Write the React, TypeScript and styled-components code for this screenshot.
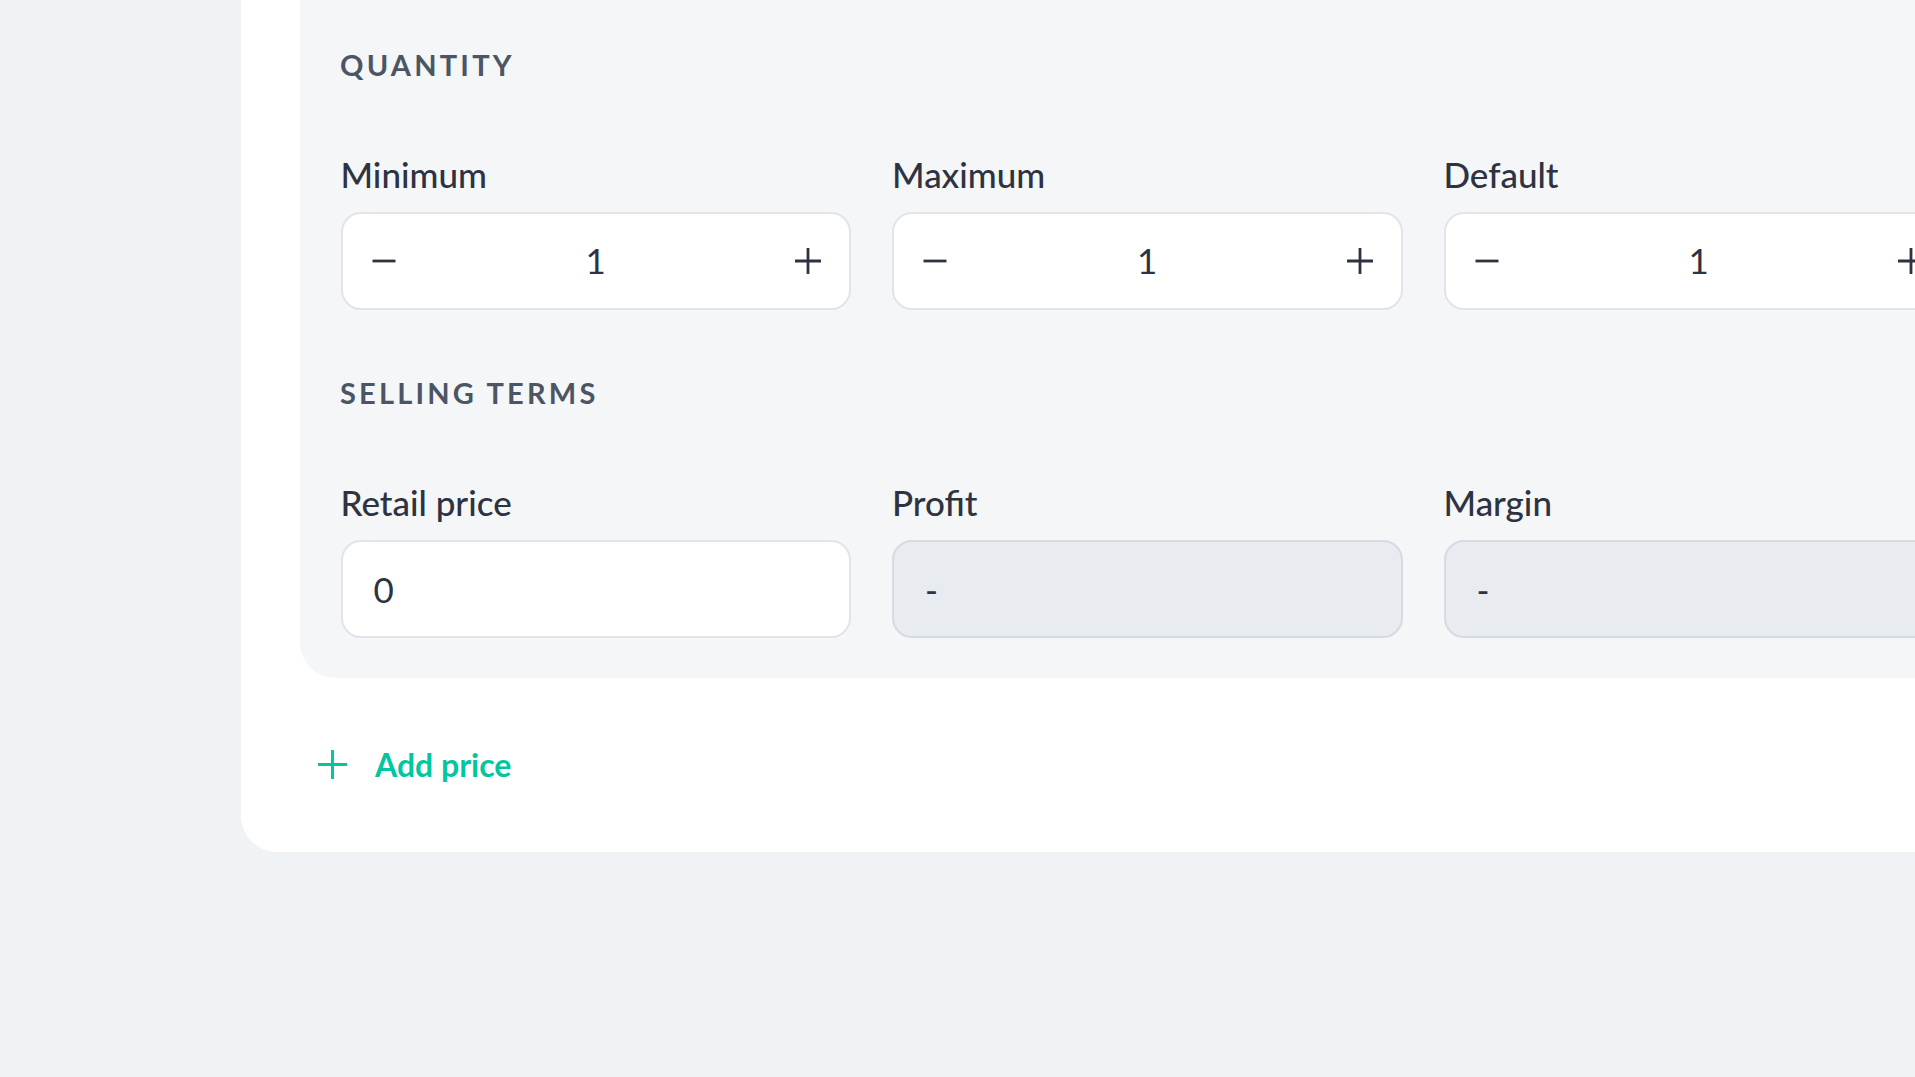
import React from "react";
import styled, { createGlobalStyle } from "styled-components";

const GlobalStyle = createGlobalStyle`
  html, body { margin: 0; padding: 0; }
  body {
    background: #eff3f6;
    font-family: Lato, "Noto Sans", sans-serif;
    overflow: hidden;
    -webkit-font-smoothing: antialiased;
  }
  * { box-sizing: border-box; }
`;

const Page = styled.div`
  width: 1915px;
  height: 1077px;
  overflow: hidden;
`;

const Card = styled.div`
  margin-left: 241px;
  width: 1800px;
  background: #ffffff;
  border-bottom-left-radius: 36px;
  padding: 0 59px;
`;

const Panel = styled.section`
  background: #f4f6f8;
  border-radius: 0 0 36px 36px;
  padding: 48px 41px 40px 40.5px;
`;

const SectionTitle = styled.h3<{ $top?: number }>`
  margin: ${(p) => p.$top ?? 0}px 0 0 -0.5px;
  font-size: 29px;
  line-height: 1.2;
  font-weight: 700;
  letter-spacing: 3.2px;
  color: #4b5563;
  text-transform: uppercase;
`;

const FieldGrid = styled.div`
  display: grid;
  grid-template-columns: repeat(3, 510.5px);
  column-gap: 41px;
  margin-top: 70px;
`;

const Field = styled.div`
  display: flex;
  flex-direction: column;
`;

const Label = styled.label`
  font-size: 35px;
  line-height: 1.2;
  font-weight: 500;
  color: #2d3340;
  margin-bottom: 17px;
`;

const Box = styled.div<{ $disabled?: boolean }>`
  height: 98px;
  border-radius: 20px;
  border: 2px solid ${(p) => (p.$disabled ? "#d6dae1" : "#e1e4ea")};
  background: ${(p) => (p.$disabled ? "#e8ebf0" : "#ffffff")};
  display: flex;
  align-items: center;
  padding: 0 31px;
  font-size: 35px;
  font-weight: 400;
  color: #2d3340;
`;

const StepperBox = styled(Box)`
  justify-content: space-between;
  padding: 0 28px;
`;

const StepButton = styled.button`
  width: 26px;
  height: 26px;
  padding: 0;
  border: 0;
  background: transparent;
  display: flex;
  align-items: center;
  justify-content: center;
  cursor: pointer;
  color: #2d3340;
`;

const StepValue = styled.span`
  font-size: 35px;
  line-height: 1;
  color: #2d3340;
`;

const AddRow = styled.div`
  padding: 66px 0 67px 18px;
  display: flex;
`;

const AddButton = styled.button`
  display: flex;
  align-items: center;
  gap: 28px;
  padding: 0;
  border: 0;
  background: transparent;
  font-family: inherit;
  font-size: 32px;
  line-height: 41px;
  font-weight: 700;
  color: #00c7a0;
  cursor: pointer;
`;

const MinusIcon = () => (
  <svg width="26" height="26" viewBox="0 0 26 26" fill="none">
    <line x1="1.5" y1="13" x2="24.5" y2="13" stroke="currentColor" strokeWidth="2.8" />
  </svg>
);

const PlusIcon = ({ size = 26, stroke = 2.8 }: { size?: number; stroke?: number }) => (
  <svg width={size} height={size} viewBox={`0 0 ${size} ${size}`} fill="none">
    <line x1="0" y1={size / 2} x2={size} y2={size / 2} stroke="currentColor" strokeWidth={stroke} strokeLinecap="round" />
    <line x1={size / 2} y1="0" x2={size / 2} y2={size} stroke="currentColor" strokeWidth={stroke} strokeLinecap="round" />
  </svg>
);

const Stepper = ({ label, value }: { label: string; value: number }) => (
  <Field>
    <Label>{label}</Label>
    <StepperBox>
      <StepButton aria-label="decrease">
        <MinusIcon />
      </StepButton>
      <StepValue>{value}</StepValue>
      <StepButton aria-label="increase">
        <PlusIcon />
      </StepButton>
    </StepperBox>
  </Field>
);

const TextField = ({ label, value, disabled }: { label: string; value: string; disabled?: boolean }) => (
  <Field>
    <Label>{label}</Label>
    <Box $disabled={disabled}>{value}</Box>
  </Field>
);

export default function App() {
  return (
    <Page>
      <GlobalStyle />
      <Card>
        <Panel>
          <SectionTitle>Quantity</SectionTitle>
          <FieldGrid>
            <Stepper label="Minimum" value={1} />
            <Stepper label="Maximum" value={1} />
            <Stepper label="Default" value={1} />
          </FieldGrid>
          <SectionTitle $top={66}>Selling terms</SectionTitle>
          <FieldGrid>
            <TextField label="Retail price" value="0" />
            <TextField label="Profit" value="-" disabled />
            <TextField label="Margin" value="-" disabled />
          </FieldGrid>
        </Panel>
        <AddRow>
          <AddButton>
            <PlusIcon size={29} stroke={3} />
            Add price
          </AddButton>
        </AddRow>
      </Card>
    </Page>
  );
}
